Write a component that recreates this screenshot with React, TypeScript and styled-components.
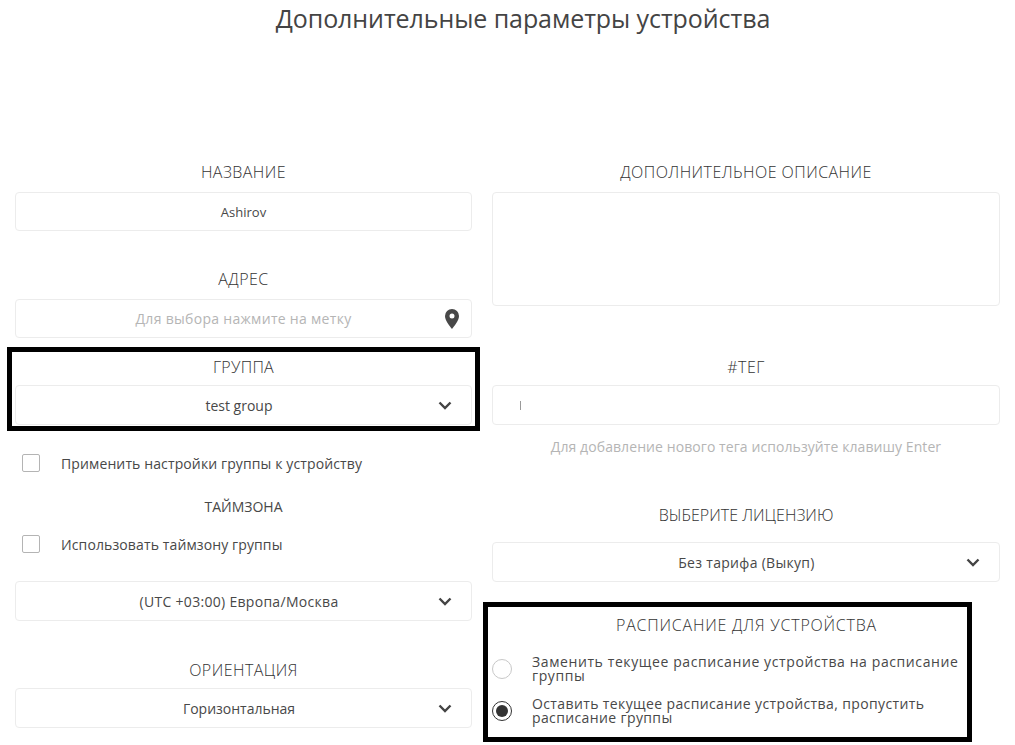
import React from 'react';
import styled, { createGlobalStyle } from 'styled-components';

const GlobalStyle = createGlobalStyle`
  html, body {
    margin: 0;
    padding: 0;
    background: #fff;
    overflow: hidden;
  }
  body {
    font-family: 'Open Sans', 'Noto Sans', sans-serif;
    color: #484848;
  }
`;

const Chevron = () => (
  <ChevronIcon viewBox="0 0 14 9" aria-hidden="true">
    <path d="M1.5 1.5 7 7l5.5-5.5" fill="none" stroke="#444" strokeWidth="2.4" />
  </ChevronIcon>
);

const Pin = () => (
  <PinIcon viewBox="0 0 14 20" aria-hidden="true">
    <path
      fillRule="evenodd"
      d="M7 0a7 7 0 0 1 7 7c0 4.6-4.6 9.8-7 13-2.4-3.2-7-8.400-7-13a7 7 0 0 1 7-7Zm0 4.600a2.500 2.500 0 1 0 0 5 2.500 2.500 0 0 0 0-5Z"
      fill="#484848"
    />
  </PinIcon>
);

const App: React.FC = () => {
  return (
    <Page>
      <GlobalStyle />
      <Title>Дополнительные параметры устройства</Title>
      <Columns>
        <Column>
          <Label>НАЗВАНИЕ</Label>
          <Field>Ashirov</Field>
          <Label $top={36}>АДРЕС</Label>
          <Field $muted>
            Для выбора нажмите на метку
            <FieldIcon>
              <Pin />
            </FieldIcon>
          </Field>
          <GroupFrame>
            <FrameLabel>ГРУППА</FrameLabel>
            <SelectField>
              <SelectText $offset={24}>test group</SelectText>
              <Chevron />
            </SelectField>
          </GroupFrame>
          <CheckRow $top={22}>
            <Checkbox />
            <CheckText>Применить настройки группы к устройству</CheckText>
          </CheckRow>
          <SmallLabel>ТАЙМЗОНА</SmallLabel>
          <CheckRow $top={17}>
            <Checkbox />
            <CheckText>Использовать таймзону группы</CheckText>
          </CheckRow>
          <SelectField $top={27}>
            <SelectText $offset={24} $wide>(UTC +03:00) Европа/Москва</SelectText>
            <Chevron />
          </SelectField>
          <Label $top={37} $height={30}>ОРИЕНТАЦИЯ</Label>
          <SelectField>
            <SelectText $offset={24}>Горизонтальная</SelectText>
            <Chevron />
          </SelectField>
        </Column>
        <Column>
          <Label>ДОПОЛНИТЕЛЬНОЕ ОПИСАНИЕ</Label>
          <TextArea />
          <Label $top={49} $height={30}>#ТЕГ</Label>
          <TagField>
            <Caret />
          </TagField>
          <Hint>Для добавление нового тега используйте клавишу Enter</Hint>
          <Label $top={46} $height={39} $tracking={0}>ВЫБЕРИТЕ ЛИЦЕНЗИЮ</Label>
          <SelectField>
            <SelectText $offset={34} $wide>Без тарифа (Выкуп)</SelectText>
            <Chevron />
          </SelectField>
          <ScheduleFrame>
            <ScheduleTitle>РАСПИСАНИЕ ДЛЯ УСТРОЙСТВА</ScheduleTitle>
            <RadioRow>
              <Radio />
              <RadioText $tracking={0.6}>Заменить текущее расписание устройства на расписание группы</RadioText>
            </RadioRow>
            <RadioRow>
              <Radio $checked />
              <RadioText $tracking={0.38}>Оставить текущее расписание устройства, пропустить расписание группы</RadioText>
            </RadioRow>
          </ScheduleFrame>
        </Column>
      </Columns>
    </Page>
  );
};

export default App;

const Page = styled.div`
  width: 1015px;
  height: 745px;
  overflow: hidden;
`;

const Title = styled.h1`
  margin: 0;
  height: 40px;
  line-height: 36px;
  width: 1046px;
  text-align: center;
  font-size: 25px;
  font-weight: 400;
  letter-spacing: -0.08px;
  color: #444;
`;

const Columns = styled.div`
  display: grid;
  grid-template-columns: 457px 508px;
  column-gap: 20px;
  padding: 120px 0 0 15px;
`;

const Column = styled.div`
  display: flex;
  flex-direction: column;
`;

const Label = styled.div<{ $top?: number; $height?: number; $tracking?: number }>`
  margin-top: ${p => p.$top ?? 0}px;
  height: ${p => p.$height ?? 32}px;
  line-height: 24px;
  text-align: center;
  font-size: 16px;
  font-weight: 300;
  letter-spacing: ${p => p.$tracking ?? 0.45}px;
  color: #333;
`;

const Field = styled.div<{ $muted?: boolean }>`
  position: relative;
  box-sizing: border-box;
  height: 39px;
  line-height: 38px;
  border: 1px solid #ececec;
  border-radius: 4px;
  text-align: center;
  font-size: ${p => (p.$muted ? 14 : 13)}px;
  letter-spacing: ${p => (p.$muted ? 0.3 : 0)}px;
  color: ${p => (p.$muted ? '#b5b5b5' : '#484848')};
`;

const FieldIcon = styled.span`
  position: absolute;
  right: 12px;
  top: 9px;
  display: flex;
`;

const PinIcon = styled.svg`
  width: 14px;
  height: 20px;
`;

const GroupFrame = styled.div`
  margin: 9px -8px 0;
  height: 84px;
  box-sizing: border-box;
  border: 5px solid #000;
  padding: 0 3px;
`;

const FrameLabel = styled.div`
  height: 33px;
  line-height: 30px;
  text-align: center;
  font-size: 16px;
  font-weight: 300;
  letter-spacing: 0.3px;
  color: #333;
`;

const SelectField = styled.div<{ $top?: number }>`
  display: flex;
  align-items: center;
  margin-top: ${p => p.$top ?? 0}px;
  box-sizing: border-box;
  height: 40px;
  padding: 0 19px 0 0;
  border: 1px solid #ececec;
  border-radius: 4px;
  font-size: 14px;
  color: #484848;
`;

const SelectText = styled.span<{ $offset: number; $wide?: boolean }>`
  flex: 1;
  text-align: center;
  padding-left: ${p => p.$offset}px;
  letter-spacing: ${p => (p.$wide ? 0.3 : 0)}px;
`;

const ChevronIcon = styled.svg`
  width: 14px;
  height: 9px;
  flex: none;
`;

const CheckRow = styled.div<{ $top: number }>`
  display: flex;
  align-items: center;
  margin-top: ${p => p.$top}px;
  padding-left: 7px;
  height: 20px;
`;

const Checkbox = styled.span`
  box-sizing: border-box;
  width: 18px;
  height: 18px;
  border: 1px solid #b4b4b4;
  border-radius: 2px;
  flex: none;
`;

const CheckText = styled.span`
  margin-left: 21px;
  font-size: 14px;
  letter-spacing: 0.12px;
  color: #484848;
`;

const SmallLabel = styled.div`
  margin-top: 24px;
  height: 20px;
  line-height: 20px;
  text-align: center;
  font-size: 14px;
  color: #484848;
`;

const TextArea = styled.div`
  box-sizing: border-box;
  height: 114px;
  border: 1px solid #ececec;
  border-radius: 4px;
`;

const TagField = styled.div`
  display: flex;
  align-items: center;
  box-sizing: border-box;
  height: 40px;
  padding-left: 27px;
  border: 1px solid #ececec;
  border-radius: 4px;
`;

const Caret = styled.span`
  width: 1px;
  height: 9px;
  background: #9a9a9a;
`;

const Hint = styled.div`
  margin-top: 12px;
  height: 20px;
  line-height: 20px;
  text-align: center;
  font-size: 14px;
  letter-spacing: 0.08px;
  color: #b5b5b5;
`;

const ScheduleFrame = styled.div`
  margin: 20px 0 0 -9px;
  width: 489px;
  height: 140px;
  box-sizing: border-box;
  border: 5px solid #000;
`;

const ScheduleTitle = styled.div`
  height: 41px;
  line-height: 36px;
  padding-left: 38px;
  text-align: center;
  font-size: 16px;
  font-weight: 300;
  letter-spacing: 0.78px;
  color: #333;
`;

const RadioRow = styled.div`
  display: flex;
  align-items: center;
  padding-left: 4px;
  height: 42px;
`;

const Radio = styled.span<{ $checked?: boolean }>`
  position: relative;
  box-sizing: border-box;
  width: 20px;
  height: 20px;
  flex: none;
  border-radius: 50%;
  border: 1px solid ${p => (p.$checked ? '#333' : '#c8c8c8')};
  &::after {
    content: '';
    display: ${p => (p.$checked ? 'block' : 'none')};
    position: absolute;
    inset: 3px;
    border-radius: 50%;
    background: #333;
  }
`;

const RadioText = styled.span<{ $tracking: number }>`
  margin-left: 20px;
  width: 432px;
  font-size: 14px;
  line-height: 14px;
  letter-spacing: ${p => p.$tracking}px;
  color: #484848;
`;
